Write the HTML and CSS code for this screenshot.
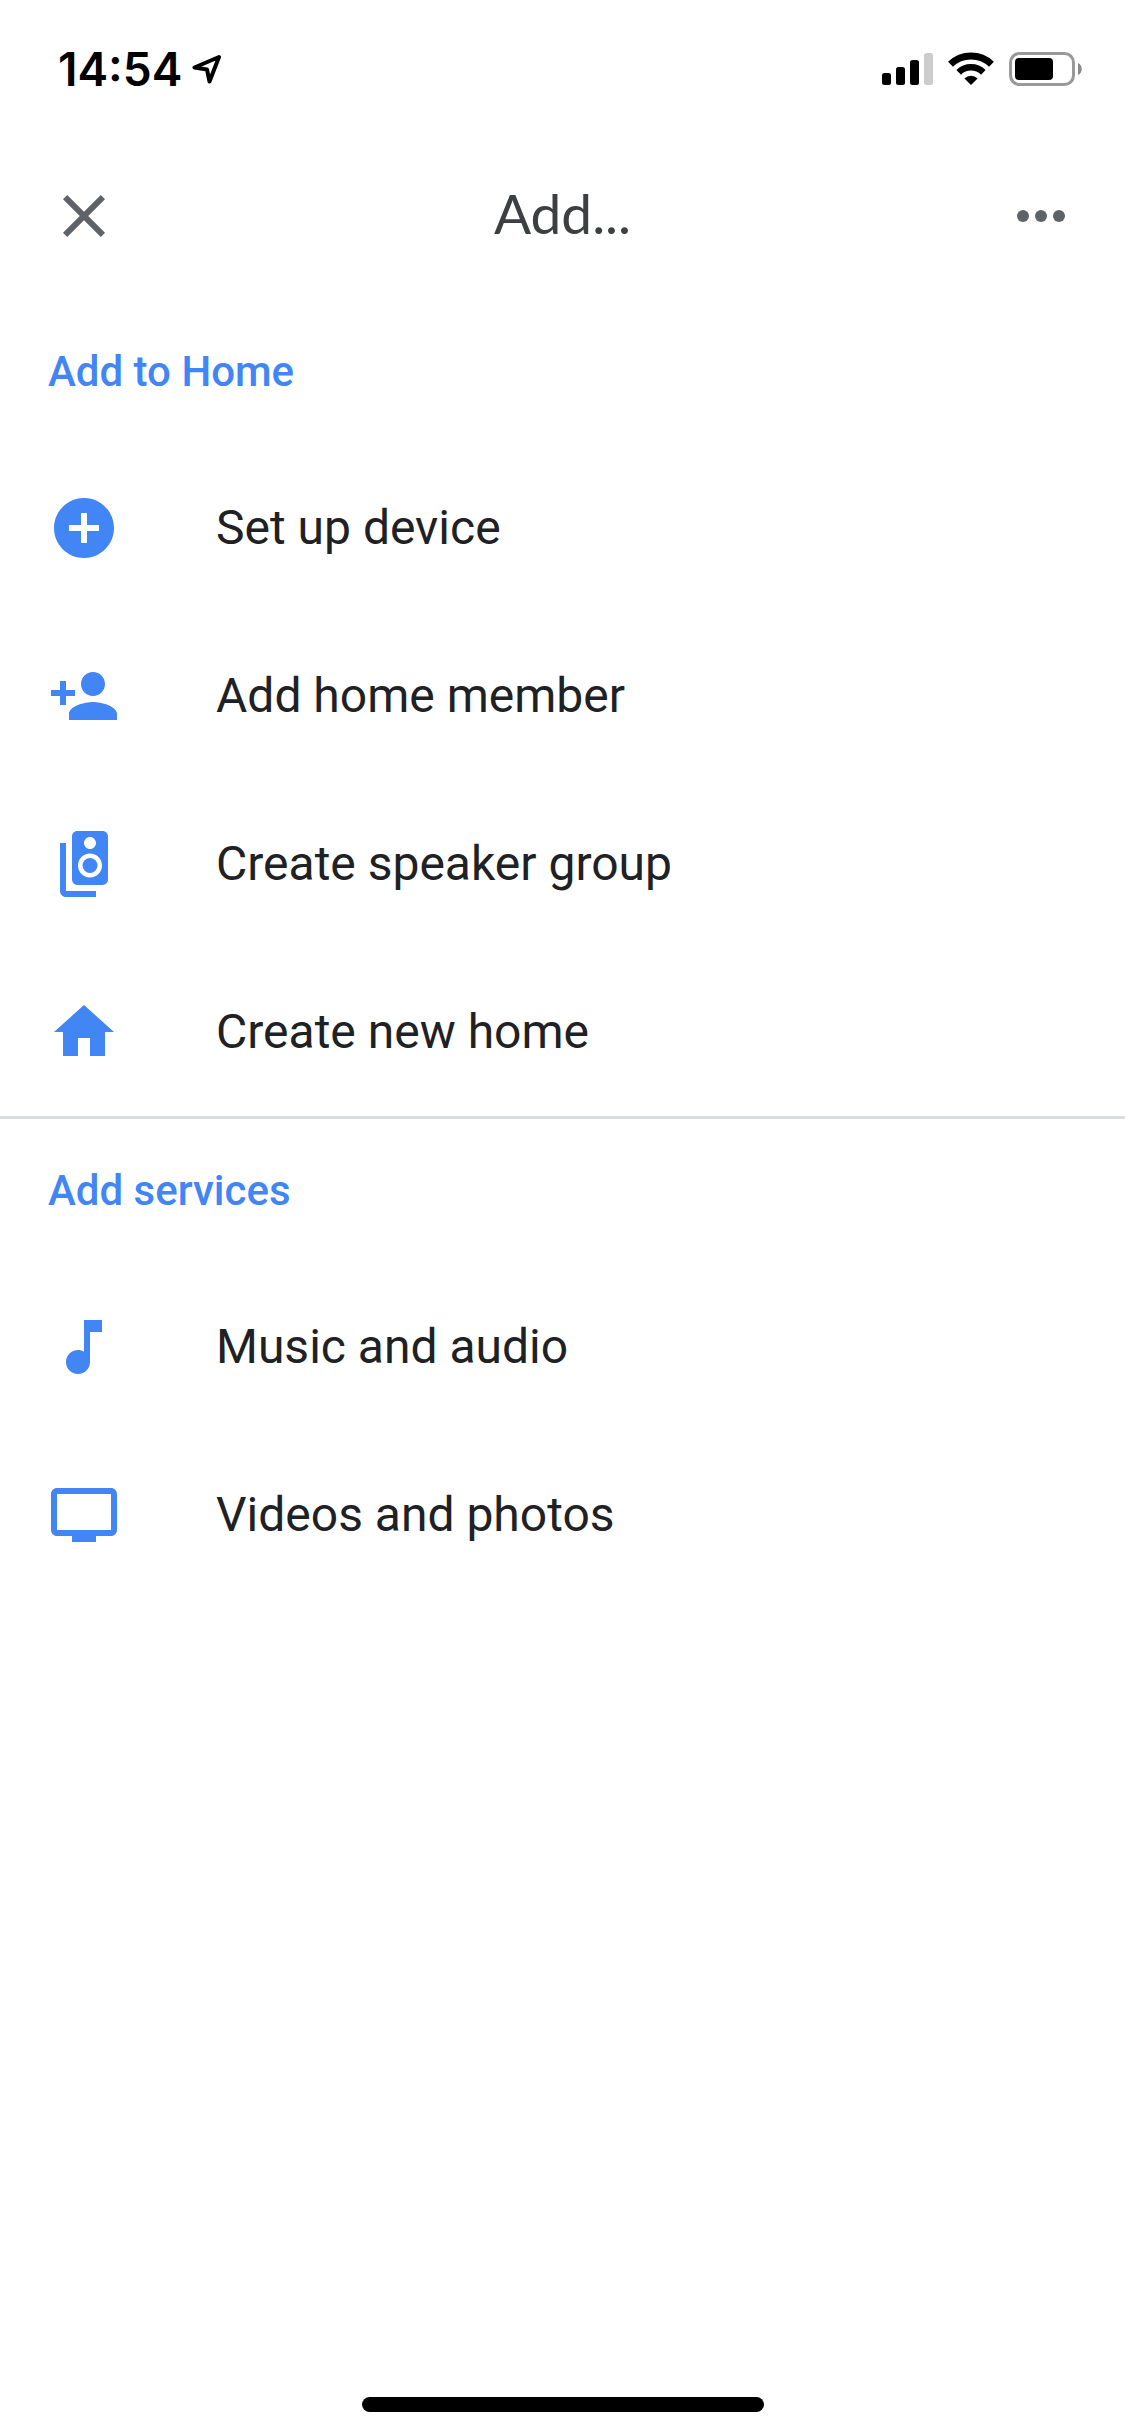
FILE: index.html
```html
<!DOCTYPE html>
<html lang="en">
<head>
<meta charset="utf-8">
<meta name="viewport" content="width=device-width, initial-scale=1">
<title>Add...</title>
<link rel="stylesheet" href="styles.css">
</head>
<body>
<div class="screen">
  <div class="status">
    <div class="status-left">
      <span class="time">14:54</span>
      <svg class="location" viewBox="0 0 30 30" aria-hidden="true"><path d="M27 3L2.500 13.500L15 15.500L17.500 27.500Z"/></svg>
    </div>
    <svg class="indicators" viewBox="0 0 200 34" aria-hidden="true">
      <rect x="0" y="21" width="9" height="12" rx="2.500"/>
      <rect x="14" y="15" width="9" height="18" rx="2.500"/>
      <rect x="28" y="8" width="9" height="25" rx="2.500"/>
      <rect x="42" y="1" width="9" height="32" rx="2.500" fill="#ccc"/>
      <g fill="none" stroke="#000">
        <path d="M68.500 12.200A29.500 29.500 0 0 1 109.500 12.200" stroke-width="7"/>
        <path d="M76.700 20.400A17.500 17.500 0 0 1 101.300 20.400" stroke-width="6.500"/>
      </g>
      <path d="M89 33L82.400 26.400A9.400 9.400 0 0 1 95.600 26.400Z"/>
      <rect x="128.500" y="1.500" width="63" height="31" rx="9" fill="none" stroke="#999" stroke-width="3"/>
      <rect x="133" y="6" width="38" height="22" rx="4"/>
      <path d="M196 11c5 2 5 10 0 12z" fill="#8a8a8a"/>
    </svg>
  </div>

  <header class="header">
    <button class="icon-button" type="button" aria-label="Close">
      <svg class="icon" viewBox="0 0 24 24"><path d="M19 6.410L17.590 5 12 10.590 6.410 5 5 6.410 10.590 12 5 17.590 6.410 19 12 13.410 17.590 19 19 17.590 13.410 12z"/></svg>
    </button>
    <h1 class="title">Add...</h1>
    <button class="icon-button" type="button" aria-label="More options">
      <svg class="icon" viewBox="0 0 24 24"><circle cx="6" cy="12" r="2"/><circle cx="12" cy="12" r="2"/><circle cx="18" cy="12" r="2"/></svg>
    </button>
  </header>

  <main class="content">
    <section class="group">
      <h2 class="group-title">Add to Home</h2>
      <button class="row" type="button">
        <svg class="icon" viewBox="0 0 24 24"><path d="M12 2C6.480 2 2 6.480 2 12s4.480 10 10 10 10-4.480 10-10S17.520 2 12 2zm5 11h-4v4h-2v-4H7v-2h4V7h2v4h4v2z"/></svg>
        <span class="label">Set up device</span>
      </button>
      <button class="row" type="button">
        <svg class="icon" viewBox="0 0 24 24"><path d="M15 12c2.210 0 4-1.790 4-4s-1.790-4-4-4-4 1.790-4 4 1.790 4 4 4zm-9-2V7H4v3H1v2h3v3h2v-3h3v-2H6zm9 4c-2.670 0-8 1.340-8 4v2h16v-2c0-2.660-5.330-4-8-4z"/></svg>
        <span class="label">Add home member</span>
      </button>
      <button class="row" type="button">
        <svg class="icon" viewBox="0 0 24 24"><path d="M18.200 1H9.800C8.810 1 8 1.810 8 2.800v14.400c0 .99.81 1.790 1.800 1.790l8.400.01c.99 0 1.800-.81 1.800-1.800V2.800c0-.99-.81-1.800-1.800-1.800zM14 3c1.100 0 2 .89 2 2s-.9 2-2 2-2-.89-2-2 .9-2 2-2zm0 13.500c-2.210 0-4-1.790-4-4s1.790-4 4-4 4 1.790 4 4-1.790 4-4 4z"/><circle cx="14" cy="12.500" r="2.500"/><path d="M6 5H4v16c0 1.100.89 2 2 2h10v-2H6V5z"/></svg>
        <span class="label">Create speaker group</span>
      </button>
      <button class="row" type="button">
        <svg class="icon" viewBox="0 0 24 24"><path d="M10 20v-6h4v6h5v-8h3L12 3 2 12h3v8z"/></svg>
        <span class="label">Create new home</span>
      </button>
    </section>
    <section class="group">
      <h2 class="group-title">Add services</h2>
      <button class="row" type="button">
        <svg class="icon" viewBox="0 0 24 24"><path d="M12 3v10.550c-.59-.34-1.270-.55-2-.55-2.210 0-4 1.790-4 4s1.790 4 4 4 4-1.790 4-4V7h4V3h-6z"/></svg>
        <span class="label">Music and audio</span>
      </button>
      <button class="row" type="button">
        <svg class="icon" viewBox="0 0 24 24"><path d="M21 3H3c-1.100 0-2 .9-2 2v12c0 1.100.9 2 2 2h5v2h8v-2h5c1.100 0 2-.9 2-2V5c0-1.100-.9-2-2-2zm0 14H3V5h18v12z"/></svg>
        <span class="label">Videos and photos</span>
      </button>
    </section>
  </main>

  <div class="home-bar"></div>
</div>
</body>
</html>
```
FILE: styles.css
```css
* {
  box-sizing: border-box;
}

body {
  margin: 0;
  background: #fff;
  color: #202124;
  font-family: Roboto, "Liberation Sans", sans-serif;
}

.screen {
  display: flex;
  flex-direction: column;
  min-height: 100vh;
  padding-bottom: 24px;
}

.status {
  display: flex;
  justify-content: space-between;
  align-items: center;
  height: 132px;
  padding: 6px 43px 0 58px;
  color: #000;
}

.status-left {
  display: flex;
  align-items: center;
  gap: 10px;
}

.time {
  font: 600 46px/56px Inter, sans-serif;
}

.location {
  width: 30px;
  height: 30px;
  fill: none;
  stroke: #000;
  stroke-width: 4;
  stroke-linejoin: round;
}

.indicators {
  width: 200px;
  height: 34px;
}

.header {
  display: flex;
  justify-content: space-between;
  align-items: center;
  height: 168px;
  padding: 0 48px;
}

.title {
  margin: 0;
  padding-bottom: 6px;
  color: #3c4043;
  font: 400 55px/72px Lato, sans-serif;
}

.icon-button {
  display: flex;
  padding: 0;
  border: 0;
  background: none;
  color: #5f6368;
  cursor: pointer;
}

.icon {
  flex: none;
  width: 72px;
  height: 72px;
  fill: currentColor;
}

.content {
  flex: 1;
}

.group + .group {
  border-top: 3px solid #dadce0;
}

.group-title {
  margin: 0;
  padding: 0 48px;
  color: #4285f4;
  font-size: 42px;
  font-weight: 500;
  line-height: 144px;
}

.row {
  display: flex;
  align-items: center;
  gap: 96px;
  width: 100%;
  height: 168px;
  padding: 0 48px;
  border: 0;
  background: none;
  color: #202124;
  font: inherit;
  font-size: 48px;
  text-align: left;
  cursor: pointer;
}

.row .icon {
  color: #4285f4;
}

.label {
  padding-bottom: 2px;
}

.home-bar {
  align-self: center;
  width: 402px;
  height: 15px;
  border-radius: 8px;
  background: #000;
}
```
